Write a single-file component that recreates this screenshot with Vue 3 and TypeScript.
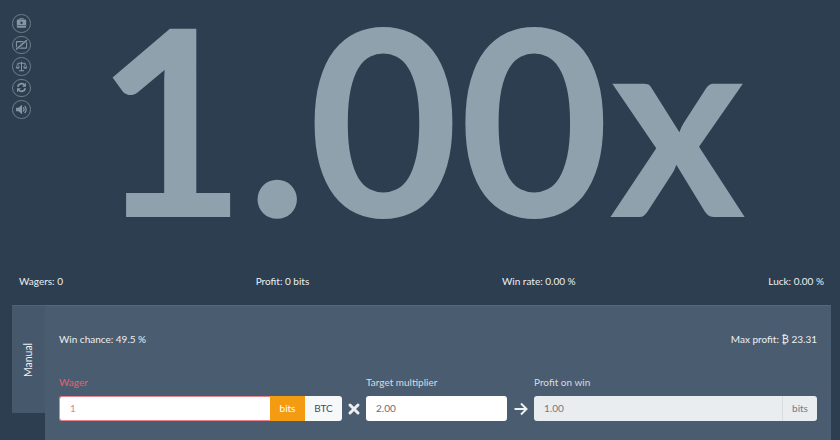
<script setup lang="ts">
const stats: string[] = ['Wagers: 0', 'Profit: 0 bits', 'Win rate: 0.00 %', 'Luck: 0.00 %']
</script>

<template>
  <div class="page">
    <div class="tools">
      <span class="tool">
        <svg viewBox="0 0 18 18"><path d="M6.500 3.500V2.200h5v1.300" fill="none" stroke="currentColor" stroke-width="1.200"/><path d="M3.500 3.500h11a1 1 0 0 1 1 1v9a1.500 1.500 0 0 1-1.500 1.500H4a1.500 1.500 0 0 1-1.500-1.500v-9a1 1 0 0 1 1-1z" fill="currentColor"/><circle cx="9" cy="8" r="1.700" fill="#2c3e50"/><path d="M2.500 11.800h13" stroke="#2c3e50" stroke-width=".8"/></svg>
      </span>
      <span class="tool">
        <svg viewBox="0 0 18 18"><rect x="2" y="5" width="14" height="9" rx="1" fill="none" stroke="currentColor" stroke-width="1.500"/><circle cx="9" cy="9.500" r="2.200" fill="currentColor"/><path d="M1.500 16 16.500 3" stroke="#2c3e50" stroke-width="3.800"/><path d="M1.500 16 16.500 3" stroke="currentColor" stroke-width="2"/></svg>
      </span>
      <span class="tool">
        <svg viewBox="0 0 18 18"><path d="M9 2.500v12M5.500 15h7M3.500 4.500h11" fill="none" stroke="currentColor" stroke-width="1.400"/><path d="M3.800 5 1.600 10h4.400zM14.200 5 12 10h4.400z" fill="none" stroke="currentColor" stroke-width=".9"/><path d="M1.200 10a2.600 2.200 0 0 0 5.200 0zM11.600 10a2.600 2.200 0 0 0 5.200 0z" fill="currentColor"/></svg>
      </span>
      <span class="tool">
        <svg viewBox="0 0 18 18"><path d="M3.800 8a5.300 5.300 0 0 1 9-2.700M14.200 10a5.300 5.300 0 0 1-9 2.700" fill="none" stroke="currentColor" stroke-width="2.400"/><path d="M15.200 2.500v5.500h-5.500zM2.800 15.500V10h5.500z" fill="currentColor"/></svg>
      </span>
      <span class="tool">
        <svg viewBox="0 0 18 18"><path d="M1.500 6.500h3.300L9.800 2.500v13l-5-4H1.500z" fill="currentColor"/><path d="M11.300 6.300a3.500 3.500 0 0 1 0 5.400M13.300 4.200a6.500 6.500 0 0 1 0 9.600" fill="none" stroke="currentColor" stroke-width="1.700"/></svg>
      </span>
    </div>

    <div class="hero">1.00x</div>

    <div class="stats">
      <span v-for="s in stats" :key="s">{{ s }}</span>
    </div>

    <div class="panel">
      <div class="tab"><span>Manual</span></div>
      <div class="body">
        <div class="info">
          <span>Win chance: 49.5 %</span>
          <span>Max profit: ₿ 23.31</span>
        </div>
        <div class="form">
          <div class="field wager">
            <label class="err">Wager</label>
            <div class="group">
              <div class="input bad">1</div>
              <span class="unit on">bits</span>
              <span class="unit off">BTC</span>
            </div>
          </div>
          <svg class="op" viewBox="0 0 14 14"><path d="M3 3l8 8M11 3l-8 8" stroke="currentColor" stroke-width="3" stroke-linecap="round"/></svg>
          <div class="field target">
            <label>Target multiplier</label>
            <div class="input">2.00</div>
          </div>
          <svg class="op arrow" viewBox="0 0 14 14"><path d="M0.500 7h12M7 1.500l5.500 5.500L7 12.500" fill="none" stroke="currentColor" stroke-width="2"/></svg>
          <div class="field profit">
            <label>Profit on win</label>
            <div class="group ro">
              <div class="value">1.00</div>
              <span class="suffix">bits</span>
            </div>
          </div>
        </div>
      </div>
    </div>
  </div>
</template>

<style>
html, body { margin: 0; background: #2c3e50; }
</style>

<style scoped>
.page {
  position: relative;
  width: 840px;
  height: 440px;
  overflow: hidden;
  background: #2c3e50;
  font-family: Lato, sans-serif;
  font-size: 10px;
  color: #ecf0f1;
  display: flex;
  flex-direction: column;
}
.tools {
  position: absolute;
  left: 12px;
  top: 14px;
  display: flex;
  flex-direction: column;
  gap: 3px;
}
.tool {
  box-sizing: border-box;
  width: 18.500px;
  height: 18.500px;
  border: 1.500px solid #6d7e8e;
  border-radius: 50%;
  color: #8696a5;
  display: flex;
  align-items: center;
  justify-content: center;
}
.tool svg { width: 13px; height: 13px; }
.hero {
  height: 272px;
  text-align: center;
  font-size: 260px;
  font-weight: 700;
  line-height: 233px;
  color: #8fa1ad;
  white-space: nowrap;
  padding-left: 1px;
}
.stats {
  height: 33px;
  padding: 0 16px 16px 19px;
  display: flex;
  justify-content: space-between;
  align-items: center;
  box-sizing: border-box;
}
.panel {
  flex: 1;
  margin: 0 9px 0 12px;
  display: flex;
  align-items: flex-start;
}
.tab {
  box-sizing: border-box;
  width: 33px;
  height: 108px;
  background: #46586b;
  border-top: 1px solid #516375;
  display: flex;
  align-items: center;
  justify-content: center;
}
.tab span { transform: rotate(-90deg); white-space: nowrap; font-size: 10.500px; }
.body {
  box-sizing: border-box;
  flex: 1;
  height: 135px;
  background: #4a5c6f;
  border-top: 1px solid #55677a;
  padding: 0 14px;
}
.info {
  height: 66px;
  display: flex;
  justify-content: space-between;
  align-items: center;
}
.form {
  display: flex;
  align-items: flex-end;
  margin-top: 4px;
}
.field label {
  display: block;
  height: 18px;
  margin-bottom: 2px;
  line-height: 12px;
  color: #d5dce2;
}
.field label.err { color: #e8606f; }
.wager { width: 283px; }
.target { width: 141px; }
.profit { flex: 1; }
.group {
  display: flex;
  height: 25px;
}
.input {
  box-sizing: border-box;
  height: 25px;
  flex: 1;
  background: #fff;
  border-radius: 3px;
  padding: 0 10px;
  line-height: 25px;
  color: #64717c;
}
.input.bad {
  border: 1px solid #e8828e;
  border-right: 0;
  border-radius: 3px 0 0 3px;
  line-height: 23px;
  color: #ee7f85;
}
.unit {
  height: 25px;
  line-height: 25px;
  text-align: center;
  box-sizing: border-box;
}
.unit.on { width: 35px; background: #f39c12; color: #fff; }
.unit.off { width: 37px; background: #f7f8f9; color: #3f4c59; border-radius: 0 3px 3px 0; }
.op { width: 14px; height: 14px; margin: 0 5px 5px; color: #ecf0f1; flex: none; }
.op.arrow { width: 14px; margin: 0 6px 5px 7px; }
.group.ro {
  background: #e9edef;
  border-radius: 3px;
  color: #6f7b85;
  line-height: 25px;
}
.value { flex: 1; padding: 0 10px; }
.suffix { width: 34px; text-align: center; border-left: 1px solid #d8dde0; }
</style>
